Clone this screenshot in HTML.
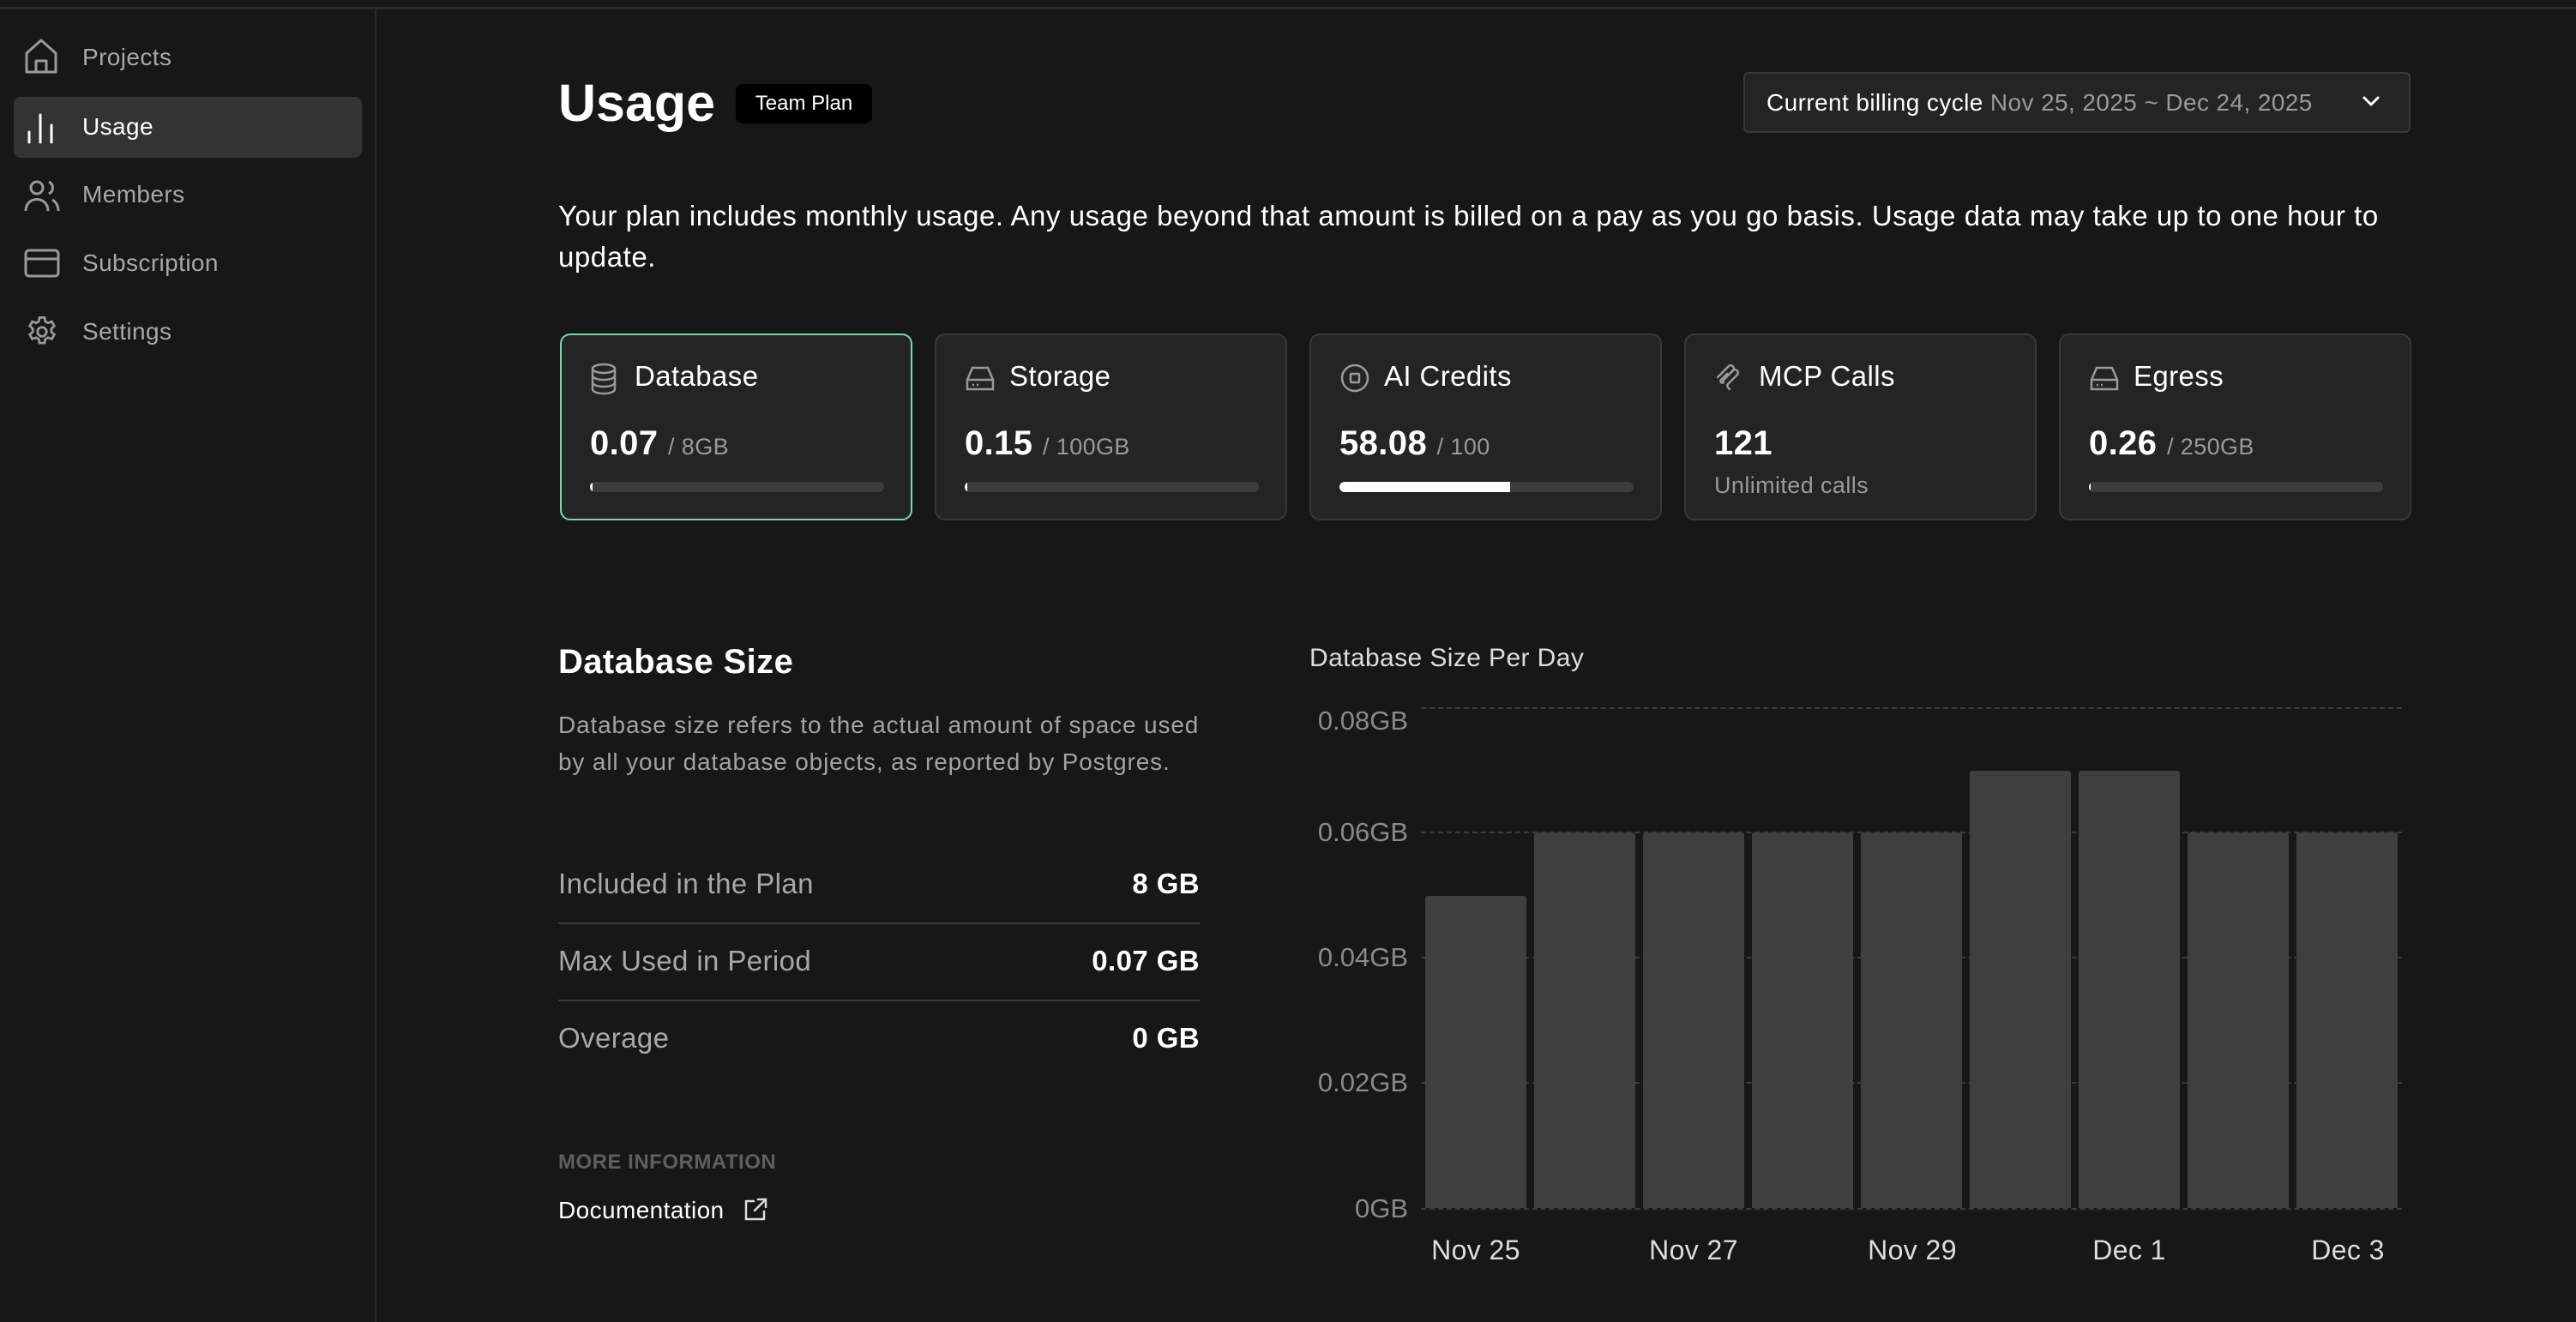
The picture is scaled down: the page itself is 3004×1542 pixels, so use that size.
<!DOCTYPE html>
<html><head><meta charset="utf-8"><style>
*{margin:0;padding:0;box-sizing:border-box}
body{width:3004px;height:1542px;background:#171717;font-family:"Liberation Sans",sans-serif;color:#fff;position:relative;overflow:hidden;letter-spacing:0.4px}
.a{position:absolute;white-space:nowrap}
.nav{position:absolute;left:96px;font-size:28px;color:#a8a8a8;line-height:40px}
.ic{position:absolute;left:28px}
.card{position:absolute;top:389px;width:411px;height:218px;background:#242424;border:2px solid #383838;border-radius:12px}
.card .t{position:absolute;left:33px;top:28px;font-size:33px;line-height:40px;color:#fff}
.card .t svg{position:absolute;left:0;top:4px}
.card .t span{margin-left:52px}
.card .v{position:absolute;left:33px;top:102px;font-size:40px;font-weight:bold;line-height:48px}
.card .v small{font-size:27px;font-weight:normal;color:#9a9a9a}
.bar{position:absolute;left:33px;top:171px;width:343px;height:12px;border-radius:6px;background:#3d3d3d;overflow:hidden}
.bar i{display:block;height:100%;background:#fff}
.row{position:absolute;left:651px;width:748px;font-size:33px;line-height:40px;color:#a8a8a8}
.row b{position:absolute;right:0;top:0;color:#fff}
.yl{position:absolute;right:1362px;font-size:31px;color:#8a8a8a;line-height:36px;letter-spacing:0}
.xl{position:absolute;font-size:32px;color:#ddd;line-height:36px;transform:translateX(-50%)}
.g{position:absolute;left:1657px;width:1144px;border-top:2px dashed #3c3c3c}
.b{position:absolute;width:118px;background:#3f3f3f;border-radius:3px 3px 0 0}
</style></head><body>
<div class="a" style="left:0;top:8px;width:3004px;height:3px;background:#2a2a2a"></div>
<div class="a" style="left:437px;top:10px;width:2px;height:1532px;background:#2c2c2c"></div>

<div class="a" style="left:16px;top:113px;width:406px;height:71px;background:#333;border-radius:8px"></div>
<svg class="ic" style="top:44px" width="40" height="44" viewBox="0 0 40 44" fill="none" stroke="#9a9a9a" stroke-width="3" stroke-linejoin="round"><path d="M3 18 L20 3 L37 18 V40 H3 Z"/><path d="M14 40 V27 H26 V40"/></svg>
<div class="nav" style="top:47px">Projects</div>
<svg class="ic" style="top:130px" width="40" height="40" viewBox="0 0 40 40" stroke="#fff" stroke-width="3" stroke-linecap="round"><path d="M6 36V24M19 36V4M32 36V16"/></svg>
<div class="nav" style="top:128px;color:#fff">Usage</div>
<svg class="ic" style="top:208px" width="42" height="40" viewBox="0 0 42 40" fill="none" stroke="#9a9a9a" stroke-width="3"><circle cx="15" cy="11" r="7"/><path d="M2 38 C2 20 28 20 28 38"/><path d="M29 4 C35 7 35 15 29 18"/><path d="M33 25 C38 28 40 33 40 38"/></svg>
<div class="nav" style="top:207px">Members</div>
<svg class="ic" style="top:290px" width="42" height="34" viewBox="0 0 42 34" fill="none" stroke="#9a9a9a" stroke-width="3"><rect x="2" y="2" width="38" height="30" rx="4"/><path d="M2 12H40"/></svg>
<div class="nav" style="top:287px">Subscription</div>
<svg class="ic" style="top:366px" width="42" height="42" viewBox="0 0 24 24" fill="none" stroke="#9a9a9a" stroke-width="1.6"><circle cx="12" cy="12" r="3"/><path d="M10.3 2.5h3.4l.5 2.6 1.8 1 2.5-.9 1.7 2.9-2 1.8v2.2l2 1.8-1.7 2.9-2.5-.9-1.8 1-.5 2.6h-3.4l-.5-2.6-1.8-1-2.5.9-1.7-2.9 2-1.8v-2.2l-2-1.8 1.7-2.9 2.5.9 1.8-1z"/></svg>
<div class="nav" style="top:367px">Settings</div>

<div class="a" style="left:651px;top:83px;font-size:61px;font-weight:bold;line-height:74px;letter-spacing:0">Usage</div>
<div class="a" style="left:858px;top:98px;width:159px;height:46px;background:#000;border-radius:8px;font-size:24px;line-height:46px;text-align:center;letter-spacing:0">Team Plan</div>

<div class="a" style="left:2033px;top:84px;width:778px;height:71px;background:#242424;border:2px solid #393939;border-radius:6px"></div>
<div class="a" style="left:2060px;top:100px;font-size:28px;line-height:40px">Current billing cycle <span style="color:#9a9a9a">Nov 25, 2025 ~ Dec 24, 2025</span></div>
<svg class="a" style="left:2754px;top:110px" width="22" height="16" viewBox="0 0 22 16" fill="none" stroke="#fff" stroke-width="3" stroke-linecap="round" stroke-linejoin="round"><path d="M3 4l8 8 8-8"/></svg>

<div class="a" style="left:651px;top:228px;font-size:33px;line-height:48px;white-space:normal;width:2170px;letter-spacing:0.55px">Your plan includes monthly usage. Any usage beyond that amount is billed on a pay as you go basis. Usage data may take up to one hour to update.</div>

<div class="card" style="left:653px;border-color:#7ed6ae">
 <div class="t"><svg width="32" height="38" viewBox="0 0 32 38" fill="none" stroke="#9a9a9a" stroke-width="2.5"><ellipse cx="16" cy="7" rx="13" ry="5"/><path d="M3 7V31C3 34 9 36 16 36S29 34 29 31V7M3 15C3 18 9 20 16 20S29 18 29 15M3 23C3 26 9 28 16 28S29 26 29 23"/></svg><span>Database</span></div>
 <div class="v">0.07 <small>/ 8GB</small></div>
 <div class="bar"><i style="width:1%"></i></div>
</div>
<div class="card" style="left:1090px">
 <div class="t"><svg width="36" height="36" viewBox="0 0 36 36" fill="none" stroke="#9a9a9a" stroke-width="2.5"><path d="M3 20 L9 6 H27 L33 20 V31 H3 Z M3 20 H33"/><path d="M9 26h2M14 26h2" /></svg><span>Storage</span></div>
 <div class="v">0.15 <small>/ 100GB</small></div>
 <div class="bar"><i style="width:1%"></i></div>
</div>
<div class="card" style="left:1527px">
 <div class="t"><svg width="36" height="36" viewBox="0 0 36 36" fill="none" stroke="#9a9a9a" stroke-width="2.5"><circle cx="18" cy="18" r="15"/><rect x="13" y="13" width="10" height="10" rx="1"/></svg><span>AI Credits</span></div>
 <div class="v">58.08 <small>/ 100</small></div>
 <div class="bar"><i style="width:58%"></i></div>
</div>
<div class="card" style="left:1964px">
 <div class="t"><svg width="36" height="36" viewBox="0 0 36 36" fill="none" stroke="#9a9a9a" stroke-width="2.5" stroke-linecap="round"><path d="M4 17 L17 4 C20 1 25 6 22 9 L12 19"/><path d="M10 21 L22 9 C25 6 30 11 27 14 L16 25 C14 27 16 29 18 31"/><path d="M15 13 L8 20 C6 22 9 25 11 23"/></svg><span>MCP Calls</span></div>
 <div class="v">121</div>
 <div class="a" style="left:33px;top:158px;font-size:27px;color:#9a9a9a;line-height:34px">Unlimited calls</div>
</div>
<div class="card" style="left:2401px">
 <div class="t"><svg width="36" height="36" viewBox="0 0 36 36" fill="none" stroke="#9a9a9a" stroke-width="2.5"><path d="M3 20 L9 6 H27 L33 20 V31 H3 Z M3 20 H33"/><path d="M9 26h2M14 26h2" /></svg><span>Egress</span></div>
 <div class="v">0.26 <small>/ 250GB</small></div>
 <div class="bar"><i style="width:0.6%"></i></div>
</div>

<div class="a" style="left:651px;top:748px;font-size:40px;font-weight:bold;line-height:48px">Database Size</div>
<div class="a" style="left:651px;top:824px;font-size:28px;line-height:43px;color:#a3a3a3;letter-spacing:0.85px">Database size refers to the actual amount of space used<br>by all your database objects, as reported by Postgres.</div>
<div class="row" style="top:1011px">Included in the Plan<b>8 GB</b></div>
<div class="a" style="left:651px;top:1076px;width:748px;height:2px;background:#3a3a3a"></div>
<div class="row" style="top:1101px">Max Used in Period<b>0.07 GB</b></div>
<div class="a" style="left:651px;top:1166px;width:748px;height:2px;background:#3a3a3a"></div>
<div class="row" style="top:1191px">Overage<b>0 GB</b></div>
<div class="a" style="left:651px;top:1341px;font-size:24px;line-height:30px;color:#5f5f5f;font-weight:bold;letter-spacing:0.5px">MORE INFORMATION</div>
<div class="a" style="left:651px;top:1393px;font-size:28px;line-height:38px">Documentation</div>
<svg class="a" style="left:866px;top:1396px" width="30" height="30" viewBox="0 0 30 30" fill="none" stroke="#ddd" stroke-width="2.5" stroke-linecap="round"><path d="M13 5H4V26H25V17"/><path d="M18 3H27V12M27 3L14 16"/></svg>

<div class="a" style="left:1527px;top:749px;font-size:30px;line-height:38px;color:#ddd">Database Size Per Day</div>
<div class="g" style="top:825px"></div>
<div class="g" style="top:970px"></div>
<div class="g" style="top:1116px"></div>
<div class="g" style="top:1262px"></div>
<div class="g" style="top:1409px"></div>
<div class="yl" style="top:823px">0.08GB</div>
<div class="yl" style="top:953px">0.06GB</div>
<div class="yl" style="top:1099px">0.04GB</div>
<div class="yl" style="top:1245px">0.02GB</div>
<div class="yl" style="top:1392px">0GB</div>
<div class="b" style="left:1662px;top:1045px;height:364px"></div>
<div class="b" style="left:1789px;top:971px;height:438px"></div>
<div class="b" style="left:1916px;top:971px;height:438px"></div>
<div class="b" style="left:2043px;top:971px;height:438px"></div>
<div class="b" style="left:2170px;top:971px;height:438px"></div>
<div class="b" style="left:2297px;top:899px;height:510px"></div>
<div class="b" style="left:2424px;top:899px;height:510px"></div>
<div class="b" style="left:2551px;top:971px;height:438px"></div>
<div class="b" style="left:2678px;top:971px;height:438px"></div>
<div class="xl" style="left:1721px;top:1440px">Nov 25</div>
<div class="xl" style="left:1975px;top:1440px">Nov 27</div>
<div class="xl" style="left:2230px;top:1440px">Nov 29</div>
<div class="xl" style="left:2483px;top:1440px">Dec 1</div>
<div class="xl" style="left:2738px;top:1440px">Dec 3</div>
</body></html>
